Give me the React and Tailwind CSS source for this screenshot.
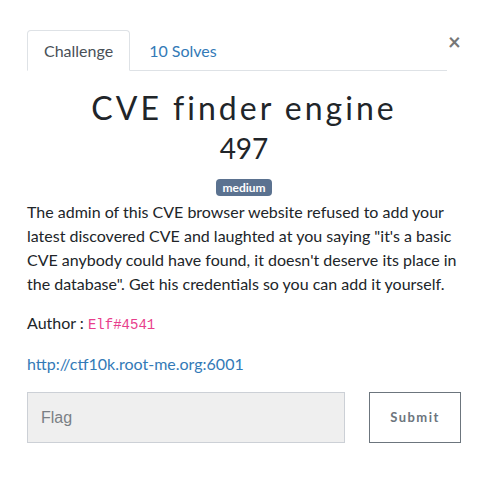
import { useState } from 'react';

const App = () => {
  const [tab, setTab] = useState('challenge');
  const [flag, setFlag] = useState('');

  return (
    <div className="relative w-[490px] h-[488px] bg-white text-[#212529]" style={{ fontFamily: 'Lato, "Noto Sans", sans-serif' }}>
      <button className="absolute left-[446px] top-[31px] text-[22px] leading-none font-bold text-[#777] px-[2px]">×</button>

      <div className="pl-[27px] pt-[30px]">
        <div className="flex w-[420px] border-b border-[#dee2e6]">
          <button
            onClick={() => setTab('challenge')}
            className={`-mb-px h-[41px] px-[16px] text-[16px] rounded-t-[4px] border ${tab === 'challenge' ? 'border-[#dee2e6] border-b-white bg-white text-[#495057]' : 'border-transparent text-[#337ab7]'}`}
          >
            Challenge
          </button>
          <button
            onClick={() => setTab('solves')}
            className={`-mb-px h-[41px] px-[18px] text-[16px] rounded-t-[4px] border ${tab === 'solves' ? 'border-[#dee2e6] border-b-white bg-white text-[#495057]' : 'border-transparent text-[#337ab7]'}`}
          >
            10 Solves
          </button>
        </div>

        <div className="w-[434px]">
          <h2 className="mt-[18px] text-center text-[32px] leading-[38px] tracking-[3px] text-[#212529]">
            CVE finder engine
          </h2>
          <h3 className="mt-[4px] text-center text-[28px] leading-[34px]">497</h3>
          <div className="mt-[14px] flex justify-center">
            <span className="rounded-[4px] bg-[#5b7290] px-[6px] text-[12px] leading-[17px] font-bold text-white">medium</span>
          </div>

          <p className="mt-[4px] text-[16px] leading-[24px]">
            The admin of this CVE browser website refused to add your latest discovered CVE and laughted at you saying "it's a basic CVE anybody could have found, it doesn't deserve its place in the database". Get his credentials so you can add it yourself.
          </p>

          <p className="mt-[15px] text-[16px] leading-[24px]">
            Author : <code className="text-[14px] text-[#e83e8c]" style={{ fontFamily: '"Liberation Mono", "DejaVu Sans Mono", monospace' }}>Elf#4541</code>
          </p>

          <p className="mt-[15px] text-[16px] leading-[24px]">
            <a href="#" className="text-[#337ab7]">http://ctf10k.root-me.org:6001</a>
          </p>
        </div>

        <div className="mt-[16px] flex w-[434px] justify-between">
          <input
            value={flag}
            onChange={(e) => setFlag(e.target.value)}
            placeholder="Flag"
            className="h-[51px] w-[318px] border border-[#ccd0d6] bg-[#efefef] px-[13px] text-[16px] text-[#495057] placeholder-[#7a7f85] outline-none"
            style={{ fontFamily: '"Liberation Sans", Arial, sans-serif' }}
          />
          <button className="h-[51px] w-[92px] border border-[#6c757d] bg-white text-[13px] font-bold tracking-[1.5px] text-[#6c757d]">
            Submit
          </button>
        </div>
      </div>
    </div>
  );
};

export default App;
